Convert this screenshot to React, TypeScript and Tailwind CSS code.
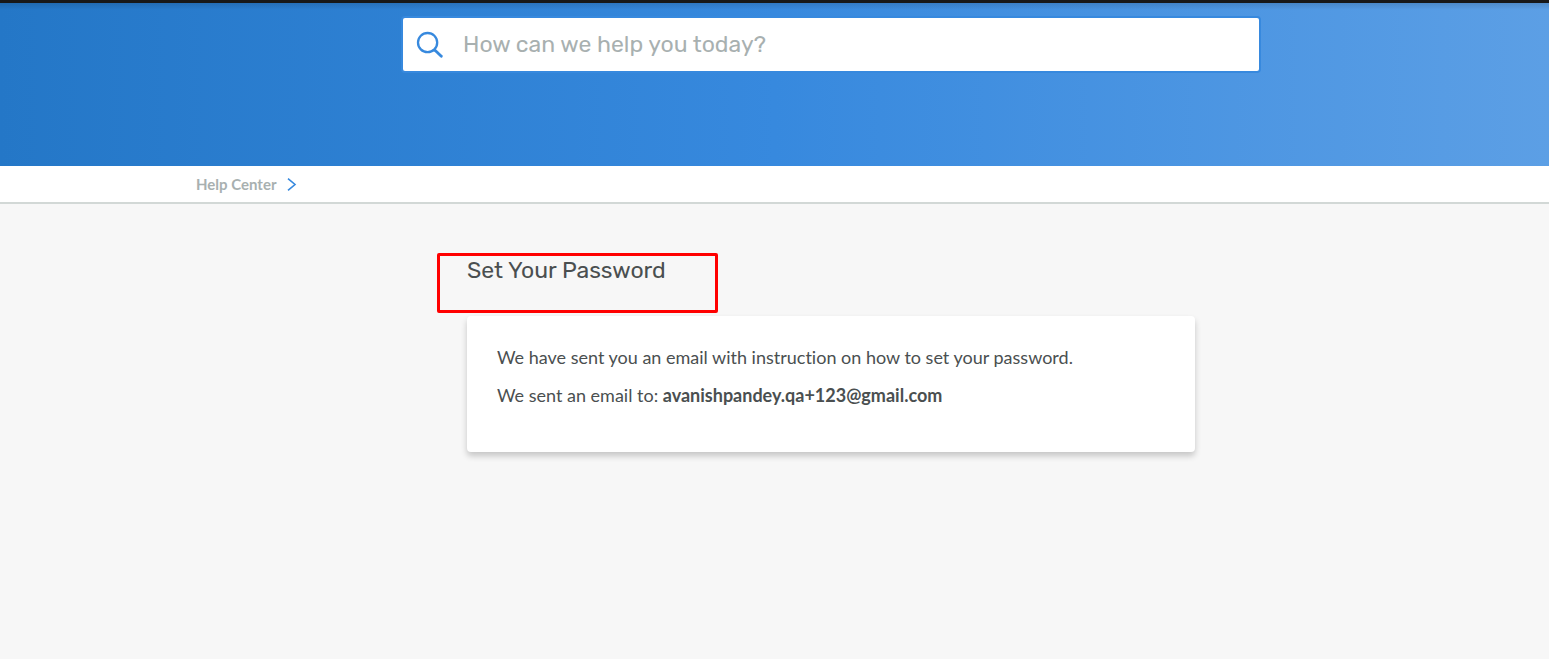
export default function App() {
  return (
    <div className="flex min-h-screen flex-col bg-[#f7f7f7] font-['Lato',sans-serif] text-[#4a4f50]">
      <header className="border-t-[3px] border-[#181818] bg-[linear-gradient(90deg,#2477c7_0%,#3789de_50%,#5c9fe5_100%)]">
        <div className="bg-[linear-gradient(rgba(0,0,0,0.12),transparent_7px)] pt-[13px] pb-[93px] pl-[113px]">
          <form
            role="search"
            className="mx-auto flex h-[57px] w-full max-w-[860px] items-center rounded-[4px] border-2 border-[#3789de] bg-white"
          >
            <button type="button" aria-label="Search" className="ml-3 size-8 shrink-0">
              <svg viewBox="0 0 32 32" className="size-8" fill="none" stroke="#3789de">
                <circle cx="12.6" cy="13.6" r="9.6" strokeWidth="2.3" />
                <path d="M20 21.2L26.3 27.2" strokeWidth="2.8" strokeLinecap="round" />
              </svg>
            </button>
            <input
              type="text"
              aria-label="Search"
              placeholder="How can we help you today?"
              className="ml-4 h-full min-w-0 flex-1 pb-0.5 font-['Rubik','Roboto',sans-serif] text-[23px] outline-none placeholder:text-[#a8b0b0]"
            />
          </form>
        </div>
      </header>

      <nav aria-label="Breadcrumb" className="border-b-2 border-[#d2d8d6] bg-white pl-[113px]">
        <div className="mx-auto flex h-9 max-w-[1270px] items-center gap-[9px]">
          <a href="#" className="text-[15px] leading-5 font-bold text-[#a8b0b0]">
            Help Center
          </a>
          <svg viewBox="0 0 14 14" className="size-3.5" fill="none" stroke="#3789de" strokeWidth="1.6">
            <path d="M3 1.7L10 7.5L3 13.3" />
          </svg>
        </div>
      </nav>

      <main className="pt-[49px] pl-[113px]">
        <div className="mx-auto max-w-[728px]">
          <div className="relative h-[63px]">
            <h1 className="font-['Rubik','Roboto',sans-serif] text-[23px] leading-[35px]">Set Your Password</h1>
            <div className="pointer-events-none absolute top-0 -left-[30px] h-[60px] w-[281px] rounded-[2px] border-[3px] border-[#ff0000]" />
          </div>
          <section className="flex flex-col gap-2 rounded-[4px] bg-white px-[30px] pt-[26px] pb-[42px] text-lg leading-[30px] shadow-[0_4px_6px_rgba(0,0,0,0.2)] [font-variant-ligatures:no-common-ligatures]">
            <p>We have sent you an email with instruction on how to set your password.</p>
            <p>
              We sent an email to: <strong>avanishpandey.qa+123@gmail.com</strong>
            </p>
          </section>
        </div>
      </main>
    </div>
  );
}
